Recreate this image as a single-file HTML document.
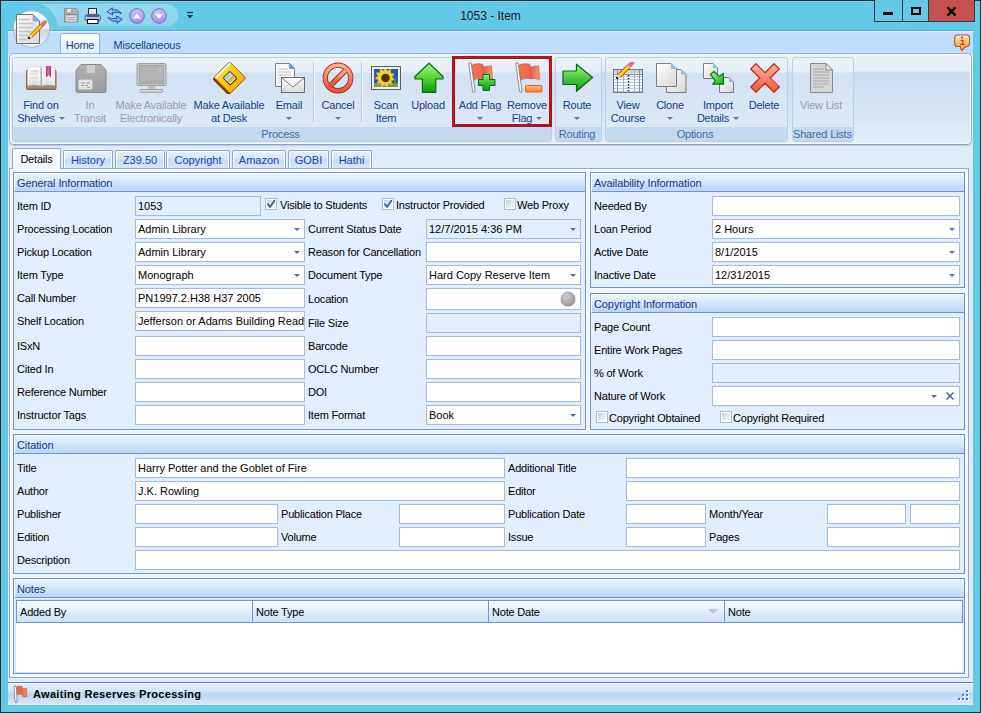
<!DOCTYPE html><html><head><meta charset="utf-8"><style>
*{margin:0;padding:0;box-sizing:border-box}
html,body{width:981px;height:713px;overflow:hidden}
body{background:#64c9e8;position:relative;font-family:"Liberation Sans", sans-serif;font-size:11px}
div,span,i{position:absolute}
.lbl{font-size:11px;line-height:13px;color:#000;white-space:nowrap;letter-spacing:-0.2px}
.tb,.dd,.dis,.cal{background:#fff;border:1px solid #a4bcdb;overflow:hidden;white-space:nowrap}
.dis{background:#e3eefc}
.tb .tx,.dd .tx,.dis .tx,.cal .tx{left:2px;top:3px;line-height:13px;color:#000;font-size:11px}
.arr{right:4px;top:8px;width:0;height:0;border-left:3px solid transparent;border-right:3px solid transparent;border-top:3px solid #4a70ab}
.grp{border:1px solid #6d94cf;background:#e2eefd;box-shadow:0 0 0 1px #f4f8fd}
.gh{left:0;top:0;right:0;height:19px;border-bottom:1px solid #6d94cf;border-top:1px solid #fff;border-left:1px solid #fff;background:linear-gradient(#eaf3fe,#bad6f8);color:#0f3a86;font-size:11px;line-height:13px;padding:3px 0 0 2px;letter-spacing:-0.1px}
.chk{width:12px;height:12px;border:1px solid #a6bddc;background:#fff}
.chk:before{content:"";position:absolute;left:1px;top:1px;width:8px;height:8px;background:linear-gradient(135deg,#c9ced6,#eef0f3 70%,#f6f7f9)}
.rb{color:#15428b;font-size:11px;line-height:13px;text-align:center;white-space:nowrap;letter-spacing:-0.2px}
.rbd{color:#9e9ca6}
.ddar{display:inline-block;position:relative;width:0;height:0;border-left:3px solid transparent;border-right:3px solid transparent;border-top:3px solid #5e7aa3;vertical-align:middle;margin-left:4px;top:-1px}
.grpbox{border:1px solid #b9cfe7;border-radius:3px;background:linear-gradient(#e9f0f9 0px,#e6eef8 14px,#d2e1f3 15px,#dce8f6 68px)}
.cap{left:0;right:0;bottom:0;height:14px;background:#c4d8ef;color:#3e6aaa;font-size:11px;line-height:13px;text-align:center;border-radius:0 0 3px 3px;white-space:nowrap;letter-spacing:-0.2px;padding-top:1px;padding-right:3px}
.tab{height:18px;border:1px solid #93a8c7;border-bottom:none;border-radius:2px 2px 0 0;background:linear-gradient(#e6eefa,#d9e5f5 45%,#c7dbf3 50%,#d9e7f8);box-shadow:inset 1px 1px 0 #f8fbff,inset -1px 0 0 #f3f7fd;color:#1c47b0;font-size:11px;line-height:13px;text-align:center;padding-top:3px}
.sep{width:1px;background:#b6cbe3;box-shadow:1px 0 0 #f1f6fc}
</style></head><body><div style="left:0;top:0;width:981px;height:713px;border:1px solid #2d2d2d"></div>
<div style="left:0;top:9px;width:981px;text-align:center;font-size:12px;line-height:14px;color:#1a1a1a">1053 - Item</div>
<div style="left:874px;top:0;width:101px;height:22px;border:1px solid #3a3a3a;border-top:none;background:#64c9e8"></div>
<div style="left:902px;top:0;width:1px;height:22px;background:#3a3a3a"></div>
<div style="left:928px;top:0;width:47px;height:22px;background:#c75050;border:1px solid #3a3a3a;border-top:none"></div>
<div style="left:883px;top:12px;width:10px;height:3px;background:#000"></div>
<div style="left:911px;top:7px;width:10px;height:8px;border:2px solid #000;border-top-width:2px"></div>
<svg style="position:absolute;left:946px;top:7px" width="11" height="9" viewBox="0 0 11 9"><path d="M1.5 0.5 L9.5 8.5 M9.5 0.5 L1.5 8.5" stroke="#000" stroke-width="2.4"/></svg>
<div style="left:1px;top:1px;width:873px;height:1px;background:#6fd6f6"></div>
<div style="left:24px;top:3px;width:155px;height:24px;border-radius:12px;background:#8fd6ee;border:1px solid #78c6e2"></div>
<div style="left:4px;top:2px;width:54px;height:54px;border-radius:50%;background:#64c9e8"></div>
<div style="left:8px;top:30px;width:965px;height:1px;background:#5fa9c9"></div>
<div style="left:8px;top:31px;width:965px;height:674px;background:#e0ebfa"></div>
<div style="left:8px;top:31px;width:965px;height:23px;background:linear-gradient(#e6f0fc,#c0dcfd 2px,#bfdbfd)"></div>
<svg style="position:absolute;left:12px;top:10px;" width="40" height="40" viewBox="0 0 40 40">
<defs><linearGradient id="ab" x1="0" y1="0" x2="0" y2="1"><stop offset="0" stop-color="#ffffff"/><stop offset="0.48" stop-color="#eef2f6"/><stop offset="0.52" stop-color="#c9d6e3"/><stop offset="1" stop-color="#eef3f8"/></linearGradient>
<linearGradient id="dg" x1="0" y1="0" x2="1" y2="1"><stop offset="0" stop-color="#fafafa"/><stop offset="1" stop-color="#d9d9d9"/></linearGradient></defs>
<circle cx="19.5" cy="19" r="18.3" fill="url(#ab)" stroke="#a7b6c6" stroke-width="1"/>
<path d="M4.5 4.5 H21 L27.5 11 V33.5 H4.5 Z" fill="url(#dg)" stroke="#707070"/>
<path d="M21 4.5 V11 H27.5 Z" fill="#7fb6ea" stroke="#5d9ad6" stroke-width="0.6"/>
<path d="M7 9.5h11 M7 13.5h15 M7 17.5h14 M7 21.5h12 M7 25.5h9 M7 29.5h8" stroke="#c3c3c3" stroke-width="1.6"/>
<path d="M18 27 L31.5 13.5" stroke="#b86d10" stroke-width="4"/>
<path d="M18 27 L31.5 13.5" stroke="#f7cf2a" stroke-width="2.4"/>
<path d="M30.5 14.5 L33 12" stroke="#d9737a" stroke-width="4" stroke-linecap="round"/>
<path d="M19.5 25.5 L17 28" stroke="#f0d0a0" stroke-width="3.4"/>
<path d="M17.6 27.4 L16.3 28.7" stroke="#111" stroke-width="2.4"/>
</svg>
<svg style="position:absolute;left:63px;top:7px;" width="16" height="16" viewBox="0 0 16 16"><path d="M1.5 1.5 H13 L15 3.5 V15 H1.5 Z" fill="#b5b5b5" stroke="#8a8a8a"/>
<rect x="3.5" y="1.5" width="7.5" height="4.5" fill="#e2e2e2" stroke="#9a9a9a"/><rect x="8.3" y="2.4" width="1.4" height="2.6" fill="#808080"/>
<path d="M2 7.5h12.5" stroke="#8a8a8a"/>
<rect x="3.5" y="8.5" width="9.5" height="6" fill="#dadada"/><path d="M4.5 10.5h7.5 M4.5 12.5h7.5" stroke="#aaa"/></svg>
<svg style="position:absolute;left:84px;top:7px;" width="18" height="18" viewBox="0 0 18 18"><defs><linearGradient id="pg" x1="0" y1="0" x2="0" y2="1"><stop offset="0" stop-color="#fff"/><stop offset="1" stop-color="#cfcfcf"/></linearGradient>
<linearGradient id="pb" x1="0" y1="0" x2="0" y2="1"><stop offset="0" stop-color="#d8ecff"/><stop offset="1" stop-color="#6ea2e0"/></linearGradient></defs>
<rect x="4.5" y="1.5" width="8" height="6.5" fill="url(#pg)" stroke="#2a2a2a"/>
<rect x="1" y="7.5" width="15.5" height="6.5" rx="2.5" fill="url(#pb)" stroke="#3f67a8"/>
<path d="M2.5 9h12.5" stroke="#111" stroke-width="1.2"/>
<rect x="3.5" y="12.5" width="10.5" height="4" fill="#fff" stroke="#111"/></svg>
<svg style="position:absolute;left:106px;top:7px;" width="18" height="17" viewBox="0 0 18 17"><defs><linearGradient id="rg" x1="0" y1="0" x2="1" y2="1"><stop offset="0" stop-color="#cfe6ff"/><stop offset="1" stop-color="#4a8ee6"/></linearGradient></defs>
<path d="M15.5 6.5 Q11.5 1.5 6 3.2 L6.3 0.8 L1 4.8 L6.8 8 L6.4 5.6 Q11 4.6 15.5 6.5 Z" fill="url(#rg)" stroke="#1d56b8" stroke-linejoin="round"/>
<path d="M1.8 10.5 Q5.8 15.5 11.3 13.8 L11 16.2 L16.3 12.2 L10.5 9 L10.9 11.4 Q6.3 12.4 1.8 10.5 Z" fill="url(#rg)" stroke="#1d56b8" stroke-linejoin="round"/></svg>
<svg style="position:absolute;left:129px;top:8px;" width="16" height="16" viewBox="0 0 16 16"><defs><linearGradient id="qg129" x1="0" y1="0" x2="0" y2="1"><stop offset="0" stop-color="#c9c6f7"/><stop offset="1" stop-color="#9b93e8"/></linearGradient></defs>
<circle cx="8" cy="8" r="7.3" fill="url(#qg129)" stroke="#6f66c8" stroke-width="1"/><path d="M4 10.5 L8 5.5 L12 10.5 Z" fill="#fff"/></svg>
<svg style="position:absolute;left:151px;top:8px;" width="16" height="16" viewBox="0 0 16 16"><defs><linearGradient id="qg151" x1="0" y1="0" x2="0" y2="1"><stop offset="0" stop-color="#c9c6f7"/><stop offset="1" stop-color="#9b93e8"/></linearGradient></defs>
<circle cx="8" cy="8" r="7.3" fill="url(#qg151)" stroke="#6f66c8" stroke-width="1"/><path d="M4 6 L8 11 L12 6 Z" fill="#fff"/></svg>
<svg style="position:absolute;left:186px;top:11px;" width="8" height="9" viewBox="0 0 8 9"><path d="M1 1.5h6" stroke="#0d2a66" stroke-width="1.2"/><path d="M1 4 L4 7.5 L7 4 Z" fill="#0d2a66"/></svg>
<div style="left:60px;top:33px;width:40px;height:21px;border:1px solid #8db2e3;border-bottom:none;border-radius:3px 3px 0 0;background:linear-gradient(#fdfeff,#e3edfa)"></div>
<div class="rb" style="left:60px;top:39px;width:40px">Home</div>
<div class="rb" style="left:113px;top:39px;width:68px">Miscellaneous</div>
<svg style="position:absolute;left:954px;top:34px;" width="17" height="18" viewBox="0 0 17 18"><defs><linearGradient id="ig" x1="0" y1="0" x2="0" y2="1"><stop offset="0" stop-color="#fff2d8"/><stop offset="0.35" stop-color="#ffc98a"/><stop offset="1" stop-color="#f7a040"/></linearGradient></defs>
<path d="M3.5 1 H12.5 Q15.5 1 15.5 4 V9.5 Q15.5 12.5 12.5 12.5 H11.8 L7.6 16.6 L6.3 12.5 H3.5 Q0.7 12.5 0.7 9.5 V4 Q0.7 1 3.5 1 Z" fill="url(#ig)" stroke="#c4501c" stroke-width="1.1" stroke-linejoin="round"/>
<rect x="7" y="2.6" width="2.2" height="1.7" fill="#b53c1a"/><path d="M6.6 6.4h2.3v4 M6.2 10.4h4.2" stroke="#b53c1a" stroke-width="1.3" fill="none"/></svg>
<div style="left:9px;top:53px;width:963px;height:92px;border:1px solid #92b4e0;border-bottom-color:#8ea3c2;border-radius:5px;background:linear-gradient(#eaf1fa 0px,#e4ecf7 17px,#cddcee 18px,#d6e4f3 60px,#e3eefa 90px);box-shadow:inset 0 0 0 1px #f3f8fd,inset 0 -1px 0 #dcf8fd,0 1px 1px rgba(120,140,170,0.35)"></div>
<div class="grpbox" style="left:12px;top:57px;width:540px;height:85px"><div class="cap">Process</div></div>
<div class="grpbox" style="left:555px;top:57px;width:47px;height:85px"><div class="cap">Routing</div></div>
<div class="grpbox" style="left:605px;top:57px;width:183px;height:85px"><div class="cap">Options</div></div>
<div class="grpbox" style="left:792px;top:57px;width:62px;height:85px"><div class="cap">Shared Lists</div></div>
<div class="sep" style="left:313px;top:61px;height:61px"></div>
<div class="sep" style="left:361px;top:61px;height:61px"></div>
<div class="rb" style="left:-9px;top:99px;width:100px">Find on</div>
<div class="rb" style="left:-9px;top:112px;width:100px">Shelves<i class="ddar"></i></div>
<div class="rb rbd" style="left:40px;top:99px;width:100px">In</div>
<div class="rb rbd" style="left:40px;top:112px;width:100px">Transit</div>
<div class="rb rbd" style="left:101px;top:99px;width:100px">Make Available</div>
<div class="rb rbd" style="left:101px;top:112px;width:100px">Electronically</div>
<div class="rb" style="left:179px;top:99px;width:100px">Make Available</div>
<div class="rb" style="left:179px;top:112px;width:100px">at Desk</div>
<div class="rb" style="left:239px;top:99px;width:100px">Email</div>
<div class="rb" style="left:239px;top:112px;width:100px"><i class="ddar" style="margin-left:0"></i></div>
<div class="rb" style="left:288px;top:99px;width:100px">Cancel</div>
<div class="rb" style="left:288px;top:112px;width:100px"><i class="ddar" style="margin-left:0"></i></div>
<div class="rb" style="left:336px;top:99px;width:100px">Scan</div>
<div class="rb" style="left:336px;top:112px;width:100px">Item</div>
<div class="rb" style="left:378px;top:99px;width:100px">Upload</div>
<div class="rb" style="left:430px;top:99px;width:100px">Add Flag</div>
<div class="rb" style="left:430px;top:112px;width:100px"><i class="ddar" style="margin-left:0"></i></div>
<div class="rb" style="left:477px;top:99px;width:100px">Remove</div>
<div class="rb" style="left:477px;top:112px;width:100px">Flag<i class="ddar"></i></div>
<div class="rb" style="left:527px;top:99px;width:100px">Route</div>
<div class="rb" style="left:527px;top:112px;width:100px"><i class="ddar" style="margin-left:0"></i></div>
<div class="rb" style="left:578px;top:99px;width:100px">View</div>
<div class="rb" style="left:578px;top:112px;width:100px">Course</div>
<div class="rb" style="left:620px;top:99px;width:100px">Clone</div>
<div class="rb" style="left:620px;top:112px;width:100px"><i class="ddar" style="margin-left:0"></i></div>
<div class="rb" style="left:668px;top:99px;width:100px">Import</div>
<div class="rb" style="left:668px;top:112px;width:100px">Details<i class="ddar"></i></div>
<div class="rb" style="left:714px;top:99px;width:100px">Delete</div>
<div class="rb rbd" style="left:771px;top:99px;width:100px">View List</div>
<div style="left:452px;top:56px;width:100px;height:71px;border:3px solid #b3121f"></div>
<svg style="position:absolute;left:25px;top:64px;" width="33" height="28" viewBox="0 0 33 28"><defs><linearGradient id="bk" x1="0" y1="0" x2="0" y2="1"><stop offset="0" stop-color="#fff"/><stop offset="1" stop-color="#e6e6e6"/></linearGradient>
<linearGradient id="bm" x1="0" y1="0" x2="1" y2="0"><stop offset="0" stop-color="#b3397a"/><stop offset="0.5" stop-color="#d6609c"/><stop offset="1" stop-color="#ae3574"/></linearGradient></defs>
<rect x="1" y="5.5" width="30.5" height="20.5" rx="2" fill="#9c5f24"/>
<rect x="2" y="20.5" width="28.5" height="4" fill="#8d9196"/>
<path d="M2.5 4 Q9 1 16 3.2 V21.5 Q9 19.8 2.5 21.5 Z" fill="url(#bk)" stroke="#cfcfcf" stroke-width="0.6"/>
<path d="M16.5 3.2 Q23.5 1 30 4 V21.5 Q23.5 19.8 16.5 21.5 Z" fill="url(#bk)" stroke="#cfcfcf" stroke-width="0.6"/>
<path d="M16.2 3.5 V24" stroke="#a0a0a0" stroke-width="1"/>
<path d="M5.5 7h8 M5.5 9.5h8 M5.5 14h8 M5.5 18.5h8 M19.5 18.5h8" stroke="#dedede" stroke-width="2"/>
<path d="M21 2 H26 V13.5 L23.5 11 L21 13.5 Z" fill="url(#bm)"/></svg>
<svg style="position:absolute;left:75px;top:63px;" width="32" height="31" viewBox="0 0 32 31"><defs><linearGradient id="bx" x1="0" y1="0" x2="0" y2="1"><stop offset="0" stop-color="#b4b4b4"/><stop offset="1" stop-color="#9a9a9a"/></linearGradient></defs>
<path d="M6 1.5 H26 L31 7 V28 Q31 29.5 29.5 29.5 H2.5 Q1 29.5 1 28 V7 Z" fill="url(#bx)" stroke="#8a8a8a"/>
<path d="M1.5 7 H30.5" stroke="#a4a4a4"/>
<rect x="12" y="2" width="8" height="8" fill="#cfcfcf"/>
<rect x="3.5" y="16.5" width="14" height="10" rx="1.5" fill="#e2e2e2" stroke="#bdbdbd"/>
<path d="M6 20h4 M11 20h4 M6 22.5h3 M10 22.5h3 M12 24.5h3" stroke="#a0a0a0"/></svg>
<svg style="position:absolute;left:136px;top:62px;" width="31" height="32" viewBox="0 0 31 32"><rect x="1" y="1.5" width="29" height="22" rx="1.5" fill="#c8c8c8" stroke="#9d9d9d"/>
<rect x="3.5" y="3.5" width="24" height="18" fill="#b3b3b3" stroke="#a3a3a3"/>
<path d="M5 19.5h20" stroke="#9a9a9a" stroke-dasharray="1 1"/><path d="M24 6v1 M24 8.5v1" stroke="#eee"/>
<path d="M12 24 H19 L20 27 H11 Z" fill="#bdbdbd"/><path d="M4.5 27.5 H26.5 Q27.5 30 26 30.5 H5 Q3.5 30 4.5 27.5Z" fill="#d2d2d2" stroke="#a5a5a5"/></svg>
<svg style="position:absolute;left:212px;top:62px;" width="34" height="32" viewBox="0 0 34 32"><defs><linearGradient id="dk" x1="0" y1="0" x2="1" y2="0"><stop offset="0" stop-color="#f8e030"/><stop offset="1" stop-color="#f0b400"/></linearGradient>
<linearGradient id="dp" x1="0" y1="0" x2="1" y2="0"><stop offset="0" stop-color="#8fc0ff"/><stop offset="0.5" stop-color="#b8d8ff"/><stop offset="0.55" stop-color="#f0a020"/><stop offset="1" stop-color="#f6c060"/></linearGradient></defs>
<g transform="translate(17.5,16) rotate(45)">
<rect x="-11.5" y="-10" width="23" height="23" rx="2" fill="#7a4204"/>
<rect x="-11.5" y="-11.5" width="23" height="22" rx="1.5" fill="url(#dk)" stroke="#9c5a04" stroke-width="0.9"/>
<rect x="-11" y="-11" width="2.2" height="21" fill="#fff8e0"/>
<rect x="-5" y="-5.5" width="11" height="10.5" rx="1.5" fill="#5a3a08"/>
<rect x="-3.6" y="-4.1" width="8.2" height="7.7" fill="url(#dp)" stroke="#fff" stroke-width="0.8"/>
</g></svg>
<svg style="position:absolute;left:275px;top:62px;" width="31" height="32" viewBox="0 0 31 32"><defs><linearGradient id="ev" x1="0" y1="0" x2="0" y2="1"><stop offset="0" stop-color="#ffffff"/><stop offset="1" stop-color="#dcdcdc"/></linearGradient></defs>
<path d="M0.5 1.5 H14.5 L19.5 6.5 V24.5 H0.5 Z" fill="#f7f7f7" stroke="#808080"/>
<path d="M14.5 1.5 L19.5 6.5 H14.5 Z" fill="#4f9ae0" stroke="#3d86d0" stroke-width="0.6"/>
<path d="M3 7h10 M3 10h13 M3 13h13 M3 16h2 M3 19h2" stroke="#c4c4c4" stroke-width="1.2"/>
<rect x="6.5" y="15.5" width="23" height="15" fill="url(#ev)" stroke="#6e6e6e"/>
<path d="M7 30 L13.5 22 M29 30 L22.5 22" stroke="#c8c8c8"/>
<path d="M7 16 L18 25 L29 16" stroke="#777" fill="#fbfbfb"/></svg>
<svg style="position:absolute;left:322px;top:62px;" width="32" height="32" viewBox="0 0 32 32"><defs><linearGradient id="cn" x1="0" y1="0" x2="0" y2="1"><stop offset="0" stop-color="#ffb59a"/><stop offset="0.5" stop-color="#f57b5a"/><stop offset="1" stop-color="#e8573a"/></linearGradient></defs>
<circle cx="16" cy="16" r="12.8" fill="none" stroke="#b3261a" stroke-width="5.2"/>
<path d="M23.5 8.5 L8.5 23.5" stroke="#b3261a" stroke-width="5.4"/>
<circle cx="16" cy="16" r="12.8" fill="none" stroke="url(#cn)" stroke-width="3.6"/>
<path d="M23.5 8.5 L8.5 23.5" stroke="url(#cn)" stroke-width="3.8"/></svg>
<svg style="position:absolute;left:371px;top:66px;" width="30" height="24" viewBox="0 0 30 24"><defs><clipPath id="scl"><rect x="3" y="3" width="24" height="18"/></clipPath></defs>
<rect x="0.5" y="0.5" width="29" height="23" fill="#f0f0f0" stroke="#5e5e5e"/>
<rect x="3" y="3" width="24" height="18" fill="#2758ad"/>
<g clip-path="url(#scl)"><rect x="3" y="17" width="24" height="4" fill="#7f9a52"/>
<polygon points="23.8,13.5 20.2,14.8 21.2,18.5 17.4,17.6 16.3,21.2 13.6,18.5 10.6,20.9 9.9,17.2 6.1,17.6 7.5,14.0 4.0,12.4 7.1,10.1 5.2,6.8 9.0,6.6 9.1,2.8 12.4,4.7 14.6,1.5 16.4,4.9 19.9,3.4 19.5,7.2 23.3,7.9 21.0,10.9" fill="#f2d330" stroke="#d9a818" stroke-width="0.5"/>
<circle cx="14.5" cy="12" r="4.3" fill="#4a3214"/><path d="M22 14 L26 12 L25 19 Z" fill="#5d7a3a"/></g></svg>
<svg style="position:absolute;left:414px;top:62px;" width="30" height="32" viewBox="0 0 30 32"><defs><linearGradient id="up" x1="0" y1="0" x2="0" y2="1"><stop offset="0" stop-color="#a4f784"/><stop offset="0.45" stop-color="#5ed840"/><stop offset="1" stop-color="#089a10"/></linearGradient></defs>
<path d="M15 1.2 L29 14.5 V17 H21.8 V30.3 H8.4 V17 H1 V14.5 Z" fill="url(#up)" stroke="#0b6a10" stroke-width="1.2" stroke-linejoin="round"/></svg>
<svg style="position:absolute;left:467px;top:62px;" width="30" height="31" viewBox="0 0 30 31"><defs><linearGradient id="fl1" x1="0" y1="0" x2="1" y2="0"><stop offset="0" stop-color="#f8744f"/><stop offset="0.45" stop-color="#f0684a"/><stop offset="0.55" stop-color="#e85c42"/><stop offset="1" stop-color="#f79a80"/></linearGradient></defs>
<path d="M3 2 L6.8 29" stroke="#8e8e8e" stroke-width="3.4" stroke-linecap="round"/>
<path d="M3 2 L6.8 29" stroke="#f6f6f6" stroke-width="1.6" stroke-linecap="round"/>
<path d="M5.3 3 Q10 1 15.5 2.2 L17 5.3 Q21 3.5 24.5 4 L25.5 17.5 Q21 15.5 17.5 16.8 Q12 15.3 6.8 17.6 Z" fill="url(#fl1)" stroke="#d4513a" stroke-width="0.7" stroke-linejoin="round"/><defs><linearGradient id="plg" x1="0" y1="0" x2="0" y2="1"><stop offset="0" stop-color="#9af27a"/><stop offset="0.5" stop-color="#3cc22c"/><stop offset="1" stop-color="#0f9a18"/></linearGradient></defs>
<path d="M11.5 17.5 H16 V12.5 H22.5 V17.5 H28 V23.5 H22.5 V28.5 H16 V23.5 H11.5 Z" fill="url(#plg)" stroke="#0a6e10" stroke-linejoin="round"/></svg>
<svg style="position:absolute;left:514px;top:62px;" width="30" height="31" viewBox="0 0 30 31"><defs><linearGradient id="fl2" x1="0" y1="0" x2="1" y2="0"><stop offset="0" stop-color="#f8744f"/><stop offset="0.45" stop-color="#f0684a"/><stop offset="0.55" stop-color="#e85c42"/><stop offset="1" stop-color="#f79a80"/></linearGradient></defs>
<path d="M3 2 L6.8 29" stroke="#8e8e8e" stroke-width="3.4" stroke-linecap="round"/>
<path d="M3 2 L6.8 29" stroke="#f6f6f6" stroke-width="1.6" stroke-linecap="round"/>
<path d="M5.3 3 Q10 1 15.5 2.2 L17 5.3 Q21 3.5 24.5 4 L25.5 17.5 Q21 15.5 17.5 16.8 Q12 15.3 6.8 17.6 Z" fill="url(#fl2)" stroke="#d4513a" stroke-width="0.7" stroke-linejoin="round"/><defs><linearGradient id="mng" x1="0" y1="0" x2="0" y2="1"><stop offset="0" stop-color="#ffc088"/><stop offset="1" stop-color="#f47a30"/></linearGradient></defs>
<rect x="11.5" y="23.5" width="16.5" height="6.5" rx="1" fill="url(#mng)" stroke="#e0661a"/></svg>
<svg style="position:absolute;left:562px;top:63px;" width="32" height="30" viewBox="0 0 32 30"><defs><linearGradient id="rt" x1="0" y1="0" x2="0" y2="1"><stop offset="0" stop-color="#9af57c"/><stop offset="1" stop-color="#0c9a14"/></linearGradient></defs>
<path d="M1 8 H14.5 V1.2 L30.5 14.5 L14.5 28.3 V21.5 H1 Z" fill="url(#rt)" stroke="#0b6a10" stroke-width="1.2" stroke-linejoin="round"/></svg>
<svg style="position:absolute;left:612px;top:62px;" width="33" height="32" viewBox="0 0 33 32"><rect x="1.5" y="7.5" width="29" height="23" fill="#fbfbfb" stroke="#777"/>
<rect x="2" y="8" width="28" height="3.5" fill="#d4d4d4"/>
<path d="M2 12.5h28" stroke="#8a8a8a"/>
<path d="M2 14.5h28 M2 17.5h28 M2 20.5h28 M2 23.5h28 M2 26.5h28 M2 29.5h28" stroke="#a9cdf3"/>
<path d="M5.5 8v22 M27.5 8v22" stroke="#8e8e8e"/><path d="M11.5 8v22 M22.5 8v22" stroke="#b0b0b0"/>
<path d="M16.5 13 v17" stroke="#222" stroke-width="1.6" stroke-dasharray="1.3 1.7"/>
<path d="M6.5 14.5 L17.5 3.5" stroke="#b8650a" stroke-width="4.6" stroke-linecap="butt"/>
<path d="M6.5 14.5 L17.5 3.5" stroke="#f8d32c" stroke-width="2.8"/>
<path d="M16.8 4.2 L18.5 2.5" stroke="#c8c8c8" stroke-width="4.4"/>
<path d="M18.3 2.7 L20 1" stroke="#e27a84" stroke-width="4.4" stroke-linecap="round"/>
<path d="M7.5 13.5 L5.3 15.7" stroke="#f2d2a2" stroke-width="3.6"/>
<path d="M5.6 15.4 L4.4 16.6" stroke="#111" stroke-width="2.4"/></svg>
<svg style="position:absolute;left:655px;top:62px;" width="32" height="32" viewBox="0 0 32 32"><defs><linearGradient id="dc" x1="0" y1="0" x2="1" y2="1"><stop offset="0" stop-color="#fff"/><stop offset="1" stop-color="#d6d6d6"/></linearGradient></defs>
<path d="M11.5 7.5 H26 L31 12.5 V30.5 H11.5 Z" fill="url(#dc)" stroke="#7d7d7d"/><path d="M26 7.5 L31 12.5 H26 Z" fill="#8cc0ec"/>
<path d="M1.5 1.5 H16 L21.5 7 V24.5 H1.5 Z" fill="url(#dc)" stroke="#7d7d7d"/><path d="M16 1.5 L21.5 7 H16 Z" fill="#8cc0ec"/></svg>
<svg style="position:absolute;left:702px;top:62px;" width="33" height="32" viewBox="0 0 33 32"><path d="M1.5 1.5 H11 L15.5 6 V16.5 H1.5 Z" fill="url(#dc)" stroke="#7d7d7d"/><path d="M11 1.5 L15.5 6 H11 Z" fill="#8cc0ec"/>
<path d="M17.5 15.5 H27 L31.5 20 V30.5 H17.5 Z" fill="url(#dc)" stroke="#7d7d7d"/><path d="M27 15.5 L31.5 20 H27 Z" fill="#8cc0ec"/>
<defs><linearGradient id="iag" x1="0" y1="0" x2="1" y2="1"><stop offset="0" stop-color="#a6f58a"/><stop offset="1" stop-color="#1aa51e"/></linearGradient></defs>
<path d="M8.4 12.3 L12 9.5 L17.4 14.3 L21.3 11.4 L21.6 22.1 L10.6 22.1 L13.4 18.8 Z" fill="url(#iag)" stroke="#0b6e12" stroke-width="1.1" stroke-linejoin="round"/></svg>
<svg style="position:absolute;left:749px;top:62px;" width="32" height="32" viewBox="0 0 32 32"><defs><linearGradient id="dx" x1="0" y1="0" x2="0" y2="1"><stop offset="0" stop-color="#ffb39c"/><stop offset="1" stop-color="#ec5a3a"/></linearGradient></defs>
<path d="M7 1.8 L16 10.8 L25 1.8 L30.2 7 L21.2 16 L30.2 25 L25 30.2 L16 21.2 L7 30.2 L1.8 25 L10.8 16 L1.8 7 Z" fill="url(#dx)" stroke="#c52a1c" stroke-width="1.3" stroke-linejoin="round"/>
<path d="M3.5 7 L7 3.5 L16 12.5 M21 16.5 L28.5 24" stroke="#ffd0c0" stroke-width="0.7" fill="none" opacity="0.8"/></svg>
<svg style="position:absolute;left:809px;top:62px;" width="25" height="32" viewBox="0 0 25 32"><path d="M1.5 1.5 H17 L23.5 8 V30.5 H1.5 Z" fill="#d6d6d6" stroke="#8a8a8a"/><path d="M17 1.5 L23.5 8 H17 Z" fill="#f0f0f0" stroke="#8a8a8a"/>
<path d="M4 7h11 M4 10h16 M4 13h16 M4 16h16 M4 19h16 M4 22h16 M4 25h11" stroke="#a8a8a8"/></svg>
<div style="left:9px;top:168px;width:960px;height:510px;border:1px solid #94a9c8;background:#f0f5fd;box-shadow:inset 0 0 0 1px #fbfdff"></div>
<div class="tab" style="left:63px;top:150px;width:50px">History</div>
<div class="tab" style="left:115px;top:150px;width:50px">Z39.50</div>
<div class="tab" style="left:166px;top:150px;width:64px">Copyright</div>
<div class="tab" style="left:232px;top:150px;width:54px">Amazon</div>
<div class="tab" style="left:288px;top:150px;width:41px">GOBI</div>
<div class="tab" style="left:331px;top:150px;width:41px">Hathi</div>
<div style="left:12px;top:148px;width:49px;height:21px;border:1px solid #94a9c8;border-bottom:none;border-radius:2px 2px 0 0;background:linear-gradient(#fbfdff,#eef4fc)"></div>
<div class="lbl" style="left:12px;top:153px;width:49px;text-align:center;color:#000">Details</div>
<div class="grp" style="left:13px;top:172px;width:573px;height:258px"><div class="gh">General Information</div></div>
<div class="lbl" style="left:17px;top:200px;">Item ID</div>
<div class="dis" style="left:135px;top:196px;width:126px;height:20px;"><span class="tx">1053</span></div>
<div class="chk" style="left:265px;top:198px"><svg width="10" height="10" viewBox="0 0 10 10" style="position:absolute;left:0;top:0"><path d="M2 5.2 L4.2 8 L8.3 1.8" stroke="#466897" stroke-width="1.9" fill="none" stroke-linecap="round" stroke-linejoin="round"/></svg></div>
<div class="lbl" style="left:280px;top:199px;">Visible to Students</div>
<div class="chk" style="left:382px;top:198px"><svg width="10" height="10" viewBox="0 0 10 10" style="position:absolute;left:0;top:0"><path d="M2 5.2 L4.2 8 L8.3 1.8" stroke="#466897" stroke-width="1.9" fill="none" stroke-linecap="round" stroke-linejoin="round"/></svg></div>
<div class="lbl" style="left:396px;top:199px;">Instructor Provided</div>
<div class="chk" style="left:504px;top:198px"></div>
<div class="lbl" style="left:517px;top:199px;">Web Proxy</div>
<div class="lbl" style="left:17px;top:223px;">Processing Location</div>
<div class="lbl" style="left:308px;top:223px;">Current Status Date</div>
<div class="dd" style="left:135px;top:219px;width:170px;height:20px;"><span class="tx">Admin Library</span><i class="arr"></i></div>
<div class="dis" style="left:426px;top:219px;width:155px;height:20px;"><span class="tx">12/7/2015 4:36 PM</span><i class="arr"></i></div>
<div class="lbl" style="left:17px;top:246px;">Pickup Location</div>
<div class="lbl" style="left:308px;top:246px;">Reason for Cancellation</div>
<div class="dd" style="left:135px;top:242px;width:170px;height:20px;"><span class="tx">Admin Library</span><i class="arr"></i></div>
<div class="tb" style="left:426px;top:242px;width:155px;height:20px;"></div>
<div class="lbl" style="left:17px;top:269px;">Item Type</div>
<div class="lbl" style="left:308px;top:269px;">Document Type</div>
<div class="dd" style="left:135px;top:265px;width:170px;height:20px;"><span class="tx">Monograph</span><i class="arr"></i></div>
<div class="tb" style="left:426px;top:265px;width:155px;height:20px;"><span class="tx">Hard Copy Reserve Item</span><i class="arr"></i></div>
<div class="lbl" style="left:17px;top:292px;">Call Number</div>
<div class="lbl" style="left:308px;top:293px;">Location</div>
<div class="tb" style="left:135px;top:288px;width:170px;height:20px;"><span class="tx">PN1997.2.H38 H37 2005</span></div>
<div class="tb" style="left:426px;top:288px;width:155px;height:22px;"></div>
<div class="lbl" style="left:17px;top:315px;">Shelf Location</div>
<div class="lbl" style="left:308px;top:317px;">File Size</div>
<div class="tb" style="left:135px;top:311px;width:170px;height:20px;"><span class="tx">Jefferson or Adams Building Reading Room</span></div>
<div class="dis" style="left:426px;top:313px;width:155px;height:20px;"></div>
<div class="lbl" style="left:17px;top:340px;">ISxN</div>
<div class="lbl" style="left:308px;top:340px;">Barcode</div>
<div class="tb" style="left:135px;top:336px;width:170px;height:20px;"></div>
<div class="tb" style="left:426px;top:336px;width:155px;height:20px;"></div>
<div class="lbl" style="left:17px;top:363px;">Cited In</div>
<div class="lbl" style="left:308px;top:363px;">OCLC Number</div>
<div class="tb" style="left:135px;top:359px;width:170px;height:20px;"></div>
<div class="tb" style="left:426px;top:359px;width:155px;height:20px;"></div>
<div class="lbl" style="left:17px;top:386px;">Reference Number</div>
<div class="lbl" style="left:308px;top:386px;">DOI</div>
<div class="tb" style="left:135px;top:382px;width:170px;height:20px;"></div>
<div class="tb" style="left:426px;top:382px;width:155px;height:20px;"></div>
<div class="lbl" style="left:17px;top:409px;">Instructor Tags</div>
<div class="lbl" style="left:308px;top:409px;">Item Format</div>
<div class="tb" style="left:135px;top:405px;width:170px;height:20px;"></div>
<div class="tb" style="left:426px;top:405px;width:155px;height:20px;"><span class="tx">Book</span><i class="arr"></i></div>
<svg style="position:absolute;left:560px;top:291px;" width="16" height="16" viewBox="0 0 16 16"><defs><radialGradient id="gl" cx="0.4" cy="0.35" r="0.7"><stop offset="0" stop-color="#d8d8d8"/><stop offset="1" stop-color="#8a8a8a"/></radialGradient></defs><circle cx="8" cy="8" r="7.5" fill="url(#gl)"/><path d="M4 5 Q7 4 8 7 Q10 9 7 11 M9 3 Q12 5 11 8" stroke="#aaa" fill="none"/></svg>
<div class="grp" style="left:590px;top:172px;width:375px;height:116px"><div class="gh">Availability Information</div></div>
<div class="lbl" style="left:594px;top:200px;">Needed By</div>
<div class="tb" style="left:712px;top:196px;width:248px;height:20px;"></div>
<div class="lbl" style="left:594px;top:223px;">Loan Period</div>
<div class="dd" style="left:712px;top:219px;width:248px;height:20px;"><span class="tx">2 Hours</span><i class="arr"></i></div>
<div class="lbl" style="left:594px;top:246px;">Active Date</div>
<div class="dd" style="left:712px;top:242px;width:248px;height:20px;"><span class="tx">8/1/2015</span><i class="arr"></i></div>
<div class="lbl" style="left:594px;top:269px;">Inactive Date</div>
<div class="dd" style="left:712px;top:265px;width:248px;height:20px;"><span class="tx">12/31/2015</span><i class="arr"></i></div>
<div class="grp" style="left:590px;top:293px;width:375px;height:137px"><div class="gh">Copyright Information</div></div>
<div class="lbl" style="left:594px;top:321px;">Page Count</div>
<div class="tb" style="left:712px;top:317px;width:248px;height:20px;"></div>
<div class="lbl" style="left:594px;top:344px;">Entire Work Pages</div>
<div class="tb" style="left:712px;top:340px;width:248px;height:20px;"></div>
<div class="lbl" style="left:594px;top:367px;">% of Work</div>
<div class="dis" style="left:712px;top:363px;width:248px;height:20px;"></div>
<div class="lbl" style="left:594px;top:390px;">Nature of Work</div>
<div class="tb" style="left:712px;top:386px;width:248px;height:20px;"></div>
<i class="arr" style="left:931px;top:395px;right:auto"></i>
<svg style="position:absolute;left:945px;top:391px;" width="10" height="10" viewBox="0 0 10 10"><path d="M1.5 1.5 L8.5 8.5 M8.5 1.5 L1.5 8.5" stroke="#3f629b" stroke-width="1.5"/></svg>
<div class="chk" style="left:596px;top:411px"></div>
<div class="lbl" style="left:609px;top:412px;">Copyright Obtained</div>
<div class="chk" style="left:720px;top:411px"></div>
<div class="lbl" style="left:733px;top:412px;">Copyright Required</div>
<div class="grp" style="left:13px;top:434px;width:952px;height:140px"><div class="gh">Citation</div></div>
<div class="lbl" style="left:17px;top:462px;">Title</div>
<div class="tb" style="left:135px;top:458px;width:370px;height:20px;"><span class="tx">Harry Potter and the Goblet of Fire</span></div>
<div class="lbl" style="left:508px;top:462px;">Additional Title</div>
<div class="tb" style="left:626px;top:458px;width:334px;height:20px;"></div>
<div class="lbl" style="left:17px;top:485px;">Author</div>
<div class="tb" style="left:135px;top:481px;width:370px;height:20px;"><span class="tx">J.K. Rowling</span></div>
<div class="lbl" style="left:508px;top:485px;">Editor</div>
<div class="tb" style="left:626px;top:481px;width:334px;height:20px;"></div>
<div class="lbl" style="left:17px;top:508px;">Publisher</div>
<div class="tb" style="left:135px;top:504px;width:143px;height:20px;"></div>
<div class="lbl" style="left:281px;top:508px;">Publication Place</div>
<div class="tb" style="left:399px;top:504px;width:106px;height:20px;"></div>
<div class="lbl" style="left:508px;top:508px;">Publication Date</div>
<div class="tb" style="left:626px;top:504px;width:80px;height:20px;"></div>
<div class="lbl" style="left:709px;top:508px;">Month/Year</div>
<div class="tb" style="left:827px;top:504px;width:79px;height:20px;"></div>
<div class="tb" style="left:910px;top:504px;width:50px;height:20px;"></div>
<div class="lbl" style="left:17px;top:531px;">Edition</div>
<div class="tb" style="left:135px;top:527px;width:143px;height:20px;"></div>
<div class="lbl" style="left:281px;top:531px;">Volume</div>
<div class="tb" style="left:399px;top:527px;width:106px;height:20px;"></div>
<div class="lbl" style="left:508px;top:531px;">Issue</div>
<div class="tb" style="left:626px;top:527px;width:80px;height:20px;"></div>
<div class="lbl" style="left:709px;top:531px;">Pages</div>
<div class="tb" style="left:827px;top:527px;width:133px;height:20px;"></div>
<div class="lbl" style="left:17px;top:554px;">Description</div>
<div class="tb" style="left:135px;top:550px;width:825px;height:20px;"></div>
<div class="grp" style="left:13px;top:578px;width:952px;height:96px"><div class="gh">Notes</div></div>
<div style="left:15px;top:599px;width:949px;height:74px;border:1px solid #d3e1f4;background:#fff"></div>
<div style="left:16px;top:600px;width:947px;height:23px;border:1px solid #6d94cf;background:linear-gradient(#f7fafe,#dce9f9 60%,#cfe0f7)"></div>
<div style="left:252px;top:601px;width:1px;height:21px;background:#6d94cf"></div>
<div style="left:488px;top:601px;width:1px;height:21px;background:#6d94cf"></div>
<div style="left:724px;top:601px;width:1px;height:21px;background:#6d94cf"></div>
<div class="lbl" style="left:20px;top:606px;">Added By</div>
<div class="lbl" style="left:256px;top:606px;">Note Type</div>
<div class="lbl" style="left:492px;top:606px;">Note Date</div>
<div class="lbl" style="left:728px;top:606px;">Note</div>
<i style="left:708px;top:609px;width:0;height:0;border-left:5px solid transparent;border-right:5px solid transparent;border-top:5px solid #a9c9ef"></i>
<div style="left:8px;top:682px;width:965px;height:23px;border-top:1px solid #5f86c0;box-shadow:inset 0 1px 0 #f4f8fe;background:linear-gradient(#e3edfa,#d6e5f8 35%,#b9d4f3 50%,#cfe1f7 80%,#dae8f9)"></div>
<svg style="position:absolute;left:12px;top:684px;" width="17" height="20" viewBox="0 0 17 20"><defs><linearGradient id="sfl" x1="0" y1="0" x2="1" y2="0"><stop offset="0" stop-color="#f46448"/><stop offset="0.5" stop-color="#f0664a"/><stop offset="1" stop-color="#f4907a"/></linearGradient></defs>
<path d="M3.2 3 L4 17.2" stroke="#8c8c8c" stroke-width="3.2" stroke-linecap="round"/>
<path d="M3.2 3 L4 17.2" stroke="#f4f4f4" stroke-width="1.4"/>
<path d="M5 2.6 Q7.5 1.6 10.2 2.6 L10.6 4.8 Q13 4 14.6 4.4 L15 12.6 Q12.6 13.2 10.8 12.6 L10.4 10.4 Q7.5 9.8 5.3 10.8 Z" fill="url(#sfl)" stroke="#d4563c" stroke-width="0.6" stroke-linejoin="round"/></svg>
<div class="lbl" style="left:33px;top:688px;font-weight:bold;letter-spacing:0.3px">Awaiting Reserves Processing</div>
<svg style="position:absolute;left:958px;top:690px;" width="12" height="12" viewBox="0 0 12 12"><rect x="9" y="1" width="2" height="2" fill="#fff"/><rect x="8" y="0" width="2" height="2" fill="#4f82cc"/><rect x="5" y="5" width="2" height="2" fill="#fff"/><rect x="4" y="4" width="2" height="2" fill="#4f82cc"/><rect x="9" y="5" width="2" height="2" fill="#fff"/><rect x="8" y="4" width="2" height="2" fill="#4f82cc"/><rect x="1" y="9" width="2" height="2" fill="#fff"/><rect x="0" y="8" width="2" height="2" fill="#4f82cc"/><rect x="5" y="9" width="2" height="2" fill="#fff"/><rect x="4" y="8" width="2" height="2" fill="#4f82cc"/><rect x="9" y="9" width="2" height="2" fill="#fff"/><rect x="8" y="8" width="2" height="2" fill="#4f82cc"/></svg></body></html>
